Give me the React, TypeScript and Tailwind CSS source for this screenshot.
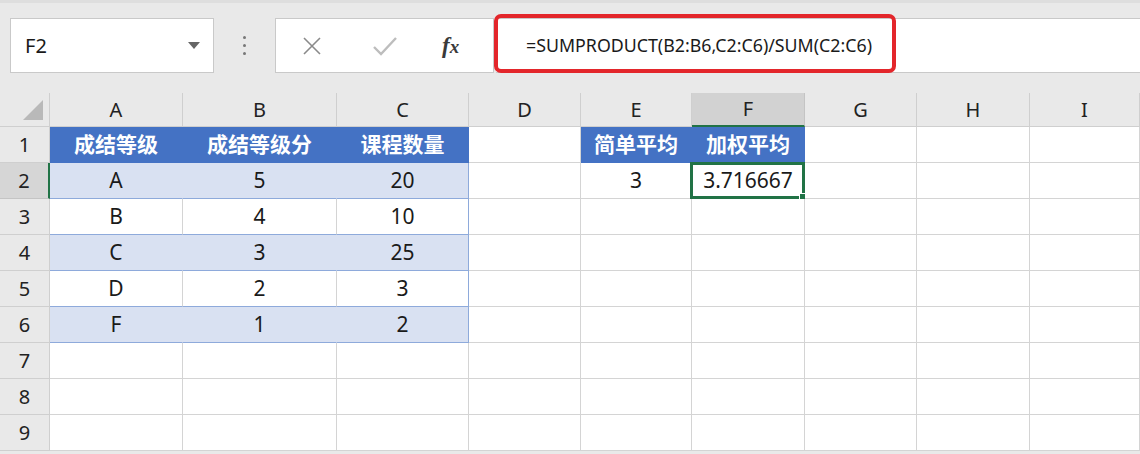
import React from "react";

const cols = ["A", "B", "C", "D", "E", "F", "G", "H", "I"];

type Cell = { text?: string; kind?: "head" | "band" | "plain" };

const empty = (): Cell[] => [{}, {}, {}, {}, {}, {}, {}, {}, {}];

const rows: Cell[][] = [
  [
    { text: "成结等级", kind: "head" },
    { text: "成结等级分", kind: "head" },
    { text: "课程数量", kind: "head" },
    {},
    { text: "简单平均", kind: "head" },
    { text: "加权平均", kind: "head" },
    {}, {}, {},
  ],
  [
    { text: "A", kind: "band" },
    { text: "5", kind: "band" },
    { text: "20", kind: "band" },
    {},
    { text: "3" },
    { text: "3.716667" },
    {}, {}, {},
  ],
  [{ text: "B", kind: "plain" }, { text: "4", kind: "plain" }, { text: "10", kind: "plain" }, {}, {}, {}, {}, {}, {}],
  [{ text: "C", kind: "band" }, { text: "3", kind: "band" }, { text: "25", kind: "band" }, {}, {}, {}, {}, {}, {}],
  [{ text: "D", kind: "plain" }, { text: "2", kind: "plain" }, { text: "3", kind: "plain" }, {}, {}, {}, {}, {}, {}],
  [{ text: "F", kind: "band" }, { text: "1", kind: "band" }, { text: "2", kind: "band" }, {}, {}, {}, {}, {}, {}],
  empty(),
  empty(),
  empty(),
];

function cellClass(c: Cell, col: number) {
  const base = "flex items-center justify-center border-b border-r";
  if (c.kind === "head") {
    return `${base} bg-[#4472c4] border-[#4472c4] text-white font-bold text-[21px]`;
  }
  if (c.kind === "band") {
    return `${base} bg-[#d9e1f2] border-b-[#8eaadb] ${col === 2 ? "border-r-[#8eaadb]" : "border-r-[#d9e1f2]"}`;
  }
  if (c.kind === "plain") {
    return `${base} bg-white border-b-[#8eaadb] ${col === 2 ? "border-r-[#8eaadb]" : "border-r-[#d4d4d4]"}`;
  }
  return `${base} bg-white border-[#d4d4d4]`;
}

export default function App() {
  return (
    <div
      className="w-[1140px] h-[454px] overflow-hidden bg-[#e9e9e9] text-[#1a1a1a]"
      style={{ fontFamily: '"Noto Sans", "Noto Sans CJK SC", sans-serif' }}
    >
      {/* formula bar */}
      <div className="h-[93px] border-t-[3px] border-[#dedede] flex items-start pt-[15px] pl-[10px]">
        <div className="w-[204px] h-[55px] bg-white border border-[#c9c9c9] flex items-center justify-between pl-[14px] pr-[13px]">
          <span className="text-[20px]">F2</span>
          <svg width="12" height="7" viewBox="0 0 12 7">
            <path d="M0 0 H12 L6 7 Z" fill="#666" />
          </svg>
        </div>
        <div className="w-[61px] h-[55px] flex flex-col items-center justify-center gap-[5px]">
          <span className="w-[3px] h-[3px] rounded-full bg-[#777]" />
          <span className="w-[3px] h-[3px] rounded-full bg-[#777]" />
          <span className="w-[3px] h-[3px] rounded-full bg-[#777]" />
        </div>
        <div className="w-[219px] h-[55px] bg-white border border-[#c9c9c9] flex items-center pl-[25px]">
          <svg width="22" height="22" viewBox="0 0 22 22">
            <path d="M3 3 L19 19 M19 3 L3 19" stroke="#8a8a8a" strokeWidth="1.6" />
          </svg>
          <svg width="26" height="22" viewBox="0 0 26 22" className="ml-[49px]">
            <path d="M2 12 L9 19 L24 3" stroke="#bdbdbd" strokeWidth="2.4" fill="none" />
          </svg>
          <span
            className="ml-[44px] text-[23px] italic font-bold text-[#3a3a3a] leading-none"
            style={{ fontFamily: '"Liberation Serif", serif' }}
          >
            f<span className="text-[19px]">x</span>
          </span>
        </div>
        <div className="flex-1 ml-[2px] h-[55px] bg-white border-y border-[#c9c9c9] relative flex items-center pl-[30px]">
          <span className="text-[17.8px]">=SUMPRODUCT(B2:B6,C2:C6)/SUM(C2:C6)</span>
          <div className="absolute -left-[2px] -top-[5px] w-[402px] h-[59px] border-[4px] border-[#e3262b] rounded-[7px]" />
        </div>
      </div>

      {/* grid */}
      <div className="grid grid-cols-[50px_133px_154px_132px_112px_111px_113px_112px_113px_1fr] grid-rows-[34px_repeat(9,36px)] text-[21px] bg-white">
        <div className="bg-[#e9e9e9] border-r border-b border-[#cfcfcf] flex items-end justify-end pr-[6px] pb-[6px]">
          <svg width="20" height="20" viewBox="0 0 20 20">
            <path d="M20 0 V20 H0 Z" fill="#b9b9b9" />
          </svg>
        </div>
        {cols.map((c) => (
          <div
            key={c}
            className={
              c === "F"
                ? "bg-[#d2d2d2] border-r border-[#c4c4c4] border-b-2 border-b-[#217346] flex items-center justify-center text-[20px] text-[#222]"
                : "bg-[#e9e9e9] border-r border-b border-[#cfcfcf] flex items-center justify-center text-[20px] text-[#222]"
            }
          >
            {c}
          </div>
        ))}
        {rows.map((r, i) => (
          <React.Fragment key={i}>
            <div
              className={
                i === 1
                  ? "bg-[#d6d6d6] border-b border-[#c4c4c4] border-r-2 border-r-[#217346] flex items-center justify-center text-[20px] text-[#222]"
                  : "bg-[#e9e9e9] border-r border-b border-[#cfcfcf] flex items-center justify-center text-[20px] text-[#222]"
              }
            >
              {i + 1}
            </div>
            {r.map((c, j) => (
              <div key={j} className={`${cellClass(c, j)} relative`}>
                {c.text}
                {i === 1 && j === 5 && (
                  <div className="absolute -left-[2px] -top-[1px] -right-[1px] -bottom-[1px] border-[3px] border-[#217346]">
                    <div className="absolute -right-[6px] -bottom-[6px] w-[9px] h-[9px] bg-[#217346] border border-white" />
                  </div>
                )}
              </div>
            ))}
          </React.Fragment>
        ))}
      </div>
    </div>
  );
}
